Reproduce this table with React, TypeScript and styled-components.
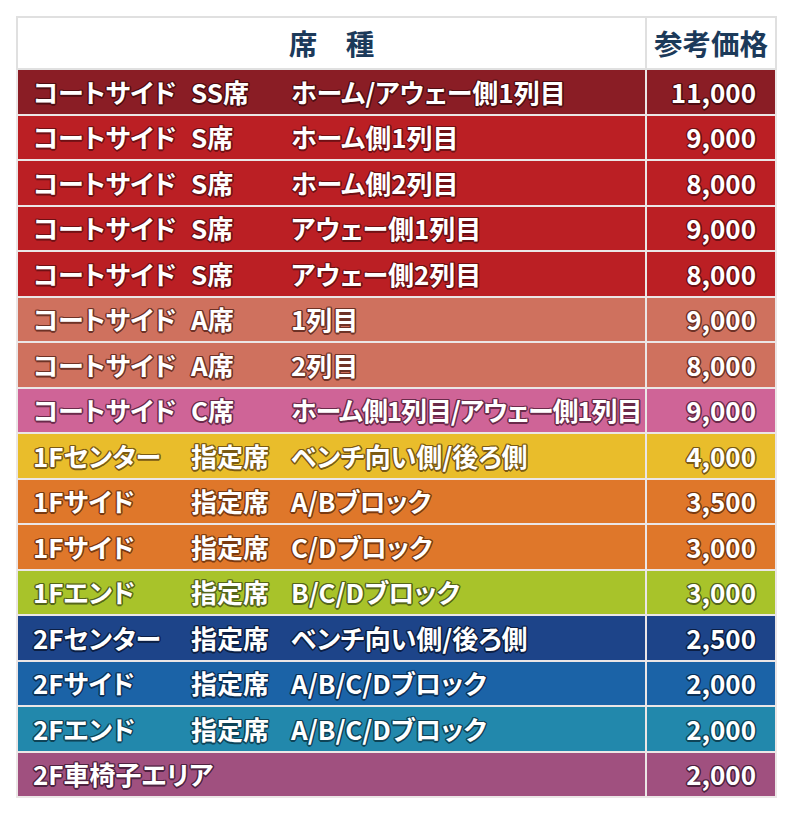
import styled, { createGlobalStyle } from "styled-components";

const GlobalStyle = createGlobalStyle`
  body {
    margin: 0;
    background: #ffffff;
    font-family: "Noto Sans CJK JP", "Noto Sans", sans-serif;
  }
`;

const Wrapper = styled.div`
  padding: 16px 15px 16px 16px;
`;

const Table = styled.table`
  width: 761px;
  border-collapse: collapse;
  table-layout: fixed;
  font-weight: 700;
`;

const HeadCell = styled.th<{ $w?: number }>`
  width: ${(p) => (p.$w ? `${p.$w}px` : "auto")};
  height: 50px;
  padding: 0;
  background: #ffffff;
  color: #1c3a5a;
  font-size: 28.5px;
  font-weight: 700;
  text-align: center;
  border: 2px solid #e0e0e0;
  line-height: 1;
`;

const Row = styled.tr<{ $bg: string; $edge: string }>`
  background: ${(p) => p.$bg};
  color: #ffffff;
  text-shadow: ${(p) =>
    `1px 1px 0 ${p.$edge}, -1px -1px 0 ${p.$edge}, 1px -1px 0 ${p.$edge}, -1px 1px 0 ${p.$edge}, 0 1.5px 0 ${p.$edge}, 0 -1.5px 0 ${p.$edge}, 1.5px 0 0 ${p.$edge}, -1.5px 0 0 ${p.$edge}`};
`;

const Cell = styled.td`
  height: 43.5px;
  padding: 0 0 0 15px;
  font-size: 26px;
  font-feature-settings: "palt";
  line-height: 1;
  border: 2px solid #ebe6e6;
  white-space: nowrap;
`;

const PriceCell = styled(Cell)`
  padding: 0 19px 0 0;
  text-align: right;
`;

const Seat = styled.div`
  display: grid;
  grid-template-columns: 158px 100px 1fr;
  align-items: center;
`;

const Detail = styled.span<{ $tight?: boolean }>`
  letter-spacing: ${(p) => (p.$tight ? "-1.1px" : "0")};
`;

type SeatRow = {
  area: string;
  grade?: string;
  detail?: string;
  price: string;
  bg: string;
  edge: string;
};

const seats: SeatRow[] = [
  { area: "コートサイド", grade: "SS席", detail: "ホーム/アウェー側1列目", price: "11,000", bg: "#8a1d25", edge: "#4e0d12" },
  { area: "コートサイド", grade: "S席", detail: "ホーム側1列目", price: "9,000", bg: "#bb1f24", edge: "#6e1014" },
  { area: "コートサイド", grade: "S席", detail: "ホーム側2列目", price: "8,000", bg: "#bb1f24", edge: "#6e1014" },
  { area: "コートサイド", grade: "S席", detail: "アウェー側1列目", price: "9,000", bg: "#bb1f24", edge: "#6e1014" },
  { area: "コートサイド", grade: "S席", detail: "アウェー側2列目", price: "8,000", bg: "#bb1f24", edge: "#6e1014" },
  { area: "コートサイド", grade: "A席", detail: "1列目", price: "9,000", bg: "#cf715e", edge: "#6e3226" },
  { area: "コートサイド", grade: "A席", detail: "2列目", price: "8,000", bg: "#cf715e", edge: "#6e3226" },
  { area: "コートサイド", grade: "C席", detail: "ホーム側1列目/アウェー側1列目", price: "9,000", bg: "#cf6497", edge: "#6a2a4a" },
  { area: "1Fセンター", grade: "指定席", detail: "ベンチ向い側/後ろ側", price: "4,000", bg: "#e9bd2b", edge: "#7a5a14" },
  { area: "1Fサイド", grade: "指定席", detail: "A/Bブロック", price: "3,500", bg: "#df772a", edge: "#7a3a10" },
  { area: "1Fサイド", grade: "指定席", detail: "C/Dブロック", price: "3,000", bg: "#df772a", edge: "#7a3a10" },
  { area: "1Fエンド", grade: "指定席", detail: "B/C/Dブロック", price: "3,000", bg: "#a8c32a", edge: "#55651a" },
  { area: "2Fセンター", grade: "指定席", detail: "ベンチ向い側/後ろ側", price: "2,500", bg: "#1d4489", edge: "#0c1f44" },
  { area: "2Fサイド", grade: "指定席", detail: "A/B/C/Dブロック", price: "2,000", bg: "#1b63a7", edge: "#0b3158" },
  { area: "2Fエンド", grade: "指定席", detail: "A/B/C/Dブロック", price: "2,000", bg: "#2288ac", edge: "#0e4458" },
  { area: "2F車椅子エリア", price: "2,000", bg: "#a0507f", edge: "#4e2240" },
];

export default function App() {
  return (
    <Wrapper>
      <GlobalStyle />
      <Table>
        <thead>
          <tr>
            <HeadCell>席　種</HeadCell>
            <HeadCell $w={128}>参考価格</HeadCell>
          </tr>
        </thead>
        <tbody>
          {seats.map((s, i) => (
            <Row key={i} $bg={s.bg} $edge={s.edge}>
              <Cell>
                {s.grade ? (
                  <Seat>
                    <span>{s.area}</span>
                    <span>{s.grade}</span>
                    <Detail $tight={(s.detail ?? "").length > 14}>{s.detail}</Detail>
                  </Seat>
                ) : (
                  s.area
                )}
              </Cell>
              <PriceCell>{s.price}</PriceCell>
            </Row>
          ))}
        </tbody>
      </Table>
    </Wrapper>
  );
}
